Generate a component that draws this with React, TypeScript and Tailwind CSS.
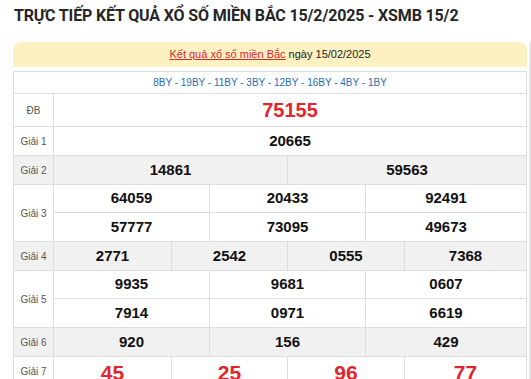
import React from 'react'

type Row = {
  label: string
  cols: string
  lines: string[][]
  shade?: boolean
  big?: boolean
}

const rows: Row[] = [
  { label: 'Giải 1', cols: 'grid-cols-1', lines: [['20665']] },
  { label: 'Giải 2', cols: 'grid-cols-[234px_1fr]', lines: [['14861', '59563']], shade: true },
  {
    label: 'Giải 3',
    cols: 'grid-cols-[156px_156px_1fr]',
    lines: [
      ['64059', '20433', '92491'],
      ['57777', '73095', '49673']
    ]
  },
  { label: 'Giải 4', cols: 'grid-cols-[118px_116px_117px_1fr]', lines: [['2771', '2542', '0555', '7368']], shade: true },
  {
    label: 'Giải 5',
    cols: 'grid-cols-[156px_156px_1fr]',
    lines: [
      ['9935', '9681', '0607'],
      ['7914', '0971', '6619']
    ]
  },
  { label: 'Giải 6', cols: 'grid-cols-[156px_156px_1fr]', lines: [['920', '156', '429']], shade: true },
  { label: 'Giải 7', cols: 'grid-cols-[118px_116px_117px_1fr]', lines: [['45', '25', '96', '77']], big: true }
]

function PrizeRow({ row }: { row: Row }) {
  return (
    <div className={`flex border-b border-[#dddddd] ${row.shade ? 'bg-[#f1f1f1]' : 'bg-white'}`}>
      <div className="w-[40px] shrink-0 flex items-center justify-center border-r border-[#dddddd] text-[10px] text-[#555]">
        {row.label}
      </div>
      <div className="flex-1 flex flex-col">
        {row.lines.map((line, i) => (
          <div
            key={i}
            className={`grid ${row.cols} h-[28px] ${i < row.lines.length - 1 ? 'border-b border-[#dddddd]' : ''}`}
          >
            {line.map((n, j) => (
              <div
                key={j}
                className={`flex items-center justify-center font-bold ${
                  j < line.length - 1 ? 'border-r border-[#dddddd]' : ''
                } ${row.big ? 'text-[21px] text-[#e0262c]' : 'text-[15px] text-[#111]'}`}
              >
                {n}
              </div>
            ))}
          </div>
        ))}
      </div>
    </div>
  )
}

export default function App() {
  return (
    <div className="w-[531px] h-[379px] overflow-hidden bg-white font-['Liberation_Sans',Arial,sans-serif]">
      <h1 className="pl-[14px] pt-[5px] h-[42px] font-['Roboto',sans-serif] font-bold text-[16px] leading-[22px] tracking-[-0.15px] text-[#262626]">
        TRỰC TIẾP KẾT QUẢ XỔ SỐ MIỀN BẮC 15/2/2025 - XSMB 15/2
      </h1>
      <div className="ml-[13px] w-[518px] pr-[2px] border-r-2 border-[#e6e6e6] h-full">
        <div className="h-[25px] rounded-t-[8px] bg-[#fdf1c2] flex items-center justify-center text-[11px] text-[#222]">
          <a className="text-[#e0262c] underline">Kết quả xổ số miền Bắc</a>
          <span className="ml-[3px]">ngày 15/02/2025</span>
        </div>
        <div className="mt-[4px] border-t border-l border-r border-[#dddddd]">
          <div className="h-[22px] border-b border-[#dddddd] flex items-center justify-center text-[10px] text-[#2a6cb3]">
            8BY - 19BY - 11BY - 3BY - 12BY - 16BY - 4BY - 1BY
          </div>
          <div className="flex h-[33px] border-b border-[#dddddd]">
            <div className="w-[40px] shrink-0 flex items-center justify-center border-r border-[#dddddd] text-[10px] text-[#555]">
              ĐB
            </div>
            <div className="flex-1 flex items-center justify-center font-bold text-[20px] text-[#e0262c]">
              75155
            </div>
          </div>
          {rows.map(r => (
            <PrizeRow key={r.label} row={r} />
          ))}
        </div>
      </div>
    </div>
  )
}
